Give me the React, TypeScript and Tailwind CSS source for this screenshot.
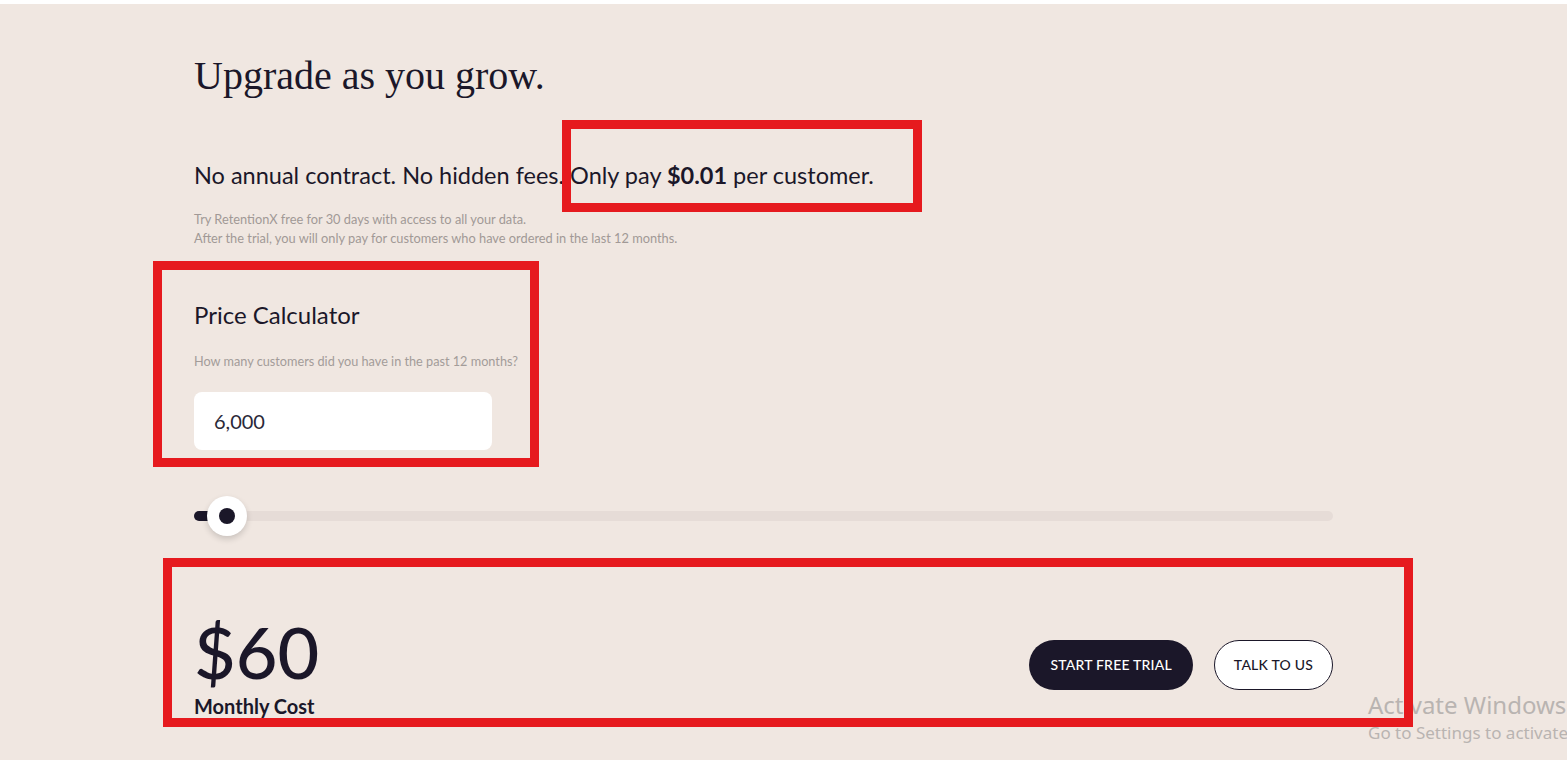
import { useState } from "react";

const lato = "font-['Lato','Noto_Sans',sans-serif]";

function PriceSlider({ value }: { value: number }) {
  // thumb center sits at 33px from the left of the track for 6,000
  return (
    <div className="relative h-10 w-[1139px] flex items-center">
      <div className="h-[10px] w-full rounded-full bg-[#e6dcd7]" />
      <div className="absolute left-0 top-[15px] h-[10px] w-[33px] rounded-full bg-[#1b1729]" />
      <div
        className="absolute top-0 left-[13px] h-10 w-10 rounded-full bg-white shadow-[0_3px_6px_rgba(0,0,0,0.16)] flex items-center justify-center"
        aria-label={`slider ${value}`}
      >
        <div className="h-4 w-4 rounded-full bg-[#1b1729]" />
      </div>
    </div>
  );
}

export default function App() {
  const [customers] = useState(6000);
  const cost = Math.round(customers * 0.01);

  return (
    <div className={`relative h-[760px] overflow-hidden border-t-4 border-white bg-[#f0e7e1] text-[#1b1729] ${lato}`}>
      <div className="pl-[194px] flex flex-col">
        <h1 className="mt-[48px] font-['Liberation_Serif','DejaVu_Serif',serif] text-[40px] leading-[48px]">
          Upgrade as you grow.
        </h1>

        <p className="mt-[60px] text-[23.5px] leading-[30px]">
          No annual contract. No hidden fees. Only pay <span className="font-bold">$0.01</span> per customer.
        </p>

        <div className="mt-[20px] text-[12.8px] leading-[19px] text-[#a19996]">
          <p>Try RetentionX free for 30 days with access to all your data.</p>
          <p>After the trial, you will only pay for customers who have ordered in the last 12 months.</p>
        </div>

        <h2 className="mt-[52px] text-[24px] leading-[30px]">Price Calculator</h2>
        <p className="mt-[22px] text-[12.7px] leading-[19px] text-[#a39c99]">
          How many customers did you have in the past 12 months?
        </p>

        <div className="mt-[21px] flex h-[58px] w-[298px] items-center rounded-lg bg-white px-5 text-[20px] text-[#2a2838]">
          {customers.toLocaleString("en-US")}
        </div>

        <div className="mt-[46px]">
          <PriceSlider value={customers} />
        </div>

        <div className="mt-[79px] flex w-[1139px] items-center justify-between">
          <div className="flex flex-col">
            <span className="text-[72px] font-medium leading-[72px]">${cost}</span>
            <span className="mt-[7px] text-[20px] font-bold leading-[24px]">Monthly Cost</span>
          </div>
          <div className="mb-[4px] flex items-center gap-[21px]">
            <button className="h-[50px] rounded-full bg-[#1b1729] px-[21px] text-[14px] font-medium uppercase tracking-[0.2px] text-white">
              Start free trial
            </button>
            <button className="h-[50px] rounded-full border border-[#1b1729] bg-white px-[19px] text-[14px] font-medium uppercase tracking-[0.2px] text-[#1b1729]">
              Talk to us
            </button>
          </div>
        </div>
      </div>

      {/* Windows watermark */}
      <div className="absolute left-[1368px] top-[685px] whitespace-nowrap font-['Noto_Sans','Open_Sans',sans-serif] text-[#b9b4b1]">
        <div className="text-[24px] leading-[32px]">Activate Windows</div>
        <div className="text-[17px] leading-[24px]">Go to Settings to activate Windows.</div>
      </div>

      {/* annotation boxes */}
      <div className="absolute left-[562px] top-[116px] h-[92px] w-[360px] border-[9px] border-[#e61a1e]" />
      <div className="absolute left-[153px] top-[257px] h-[206px] w-[386px] border-[9px] border-[#e61a1e]" />
      <div className="absolute left-[163px] top-[554px] h-[169px] w-[1250px] border-[9px] border-[#e61a1e]" />
    </div>
  );
}
